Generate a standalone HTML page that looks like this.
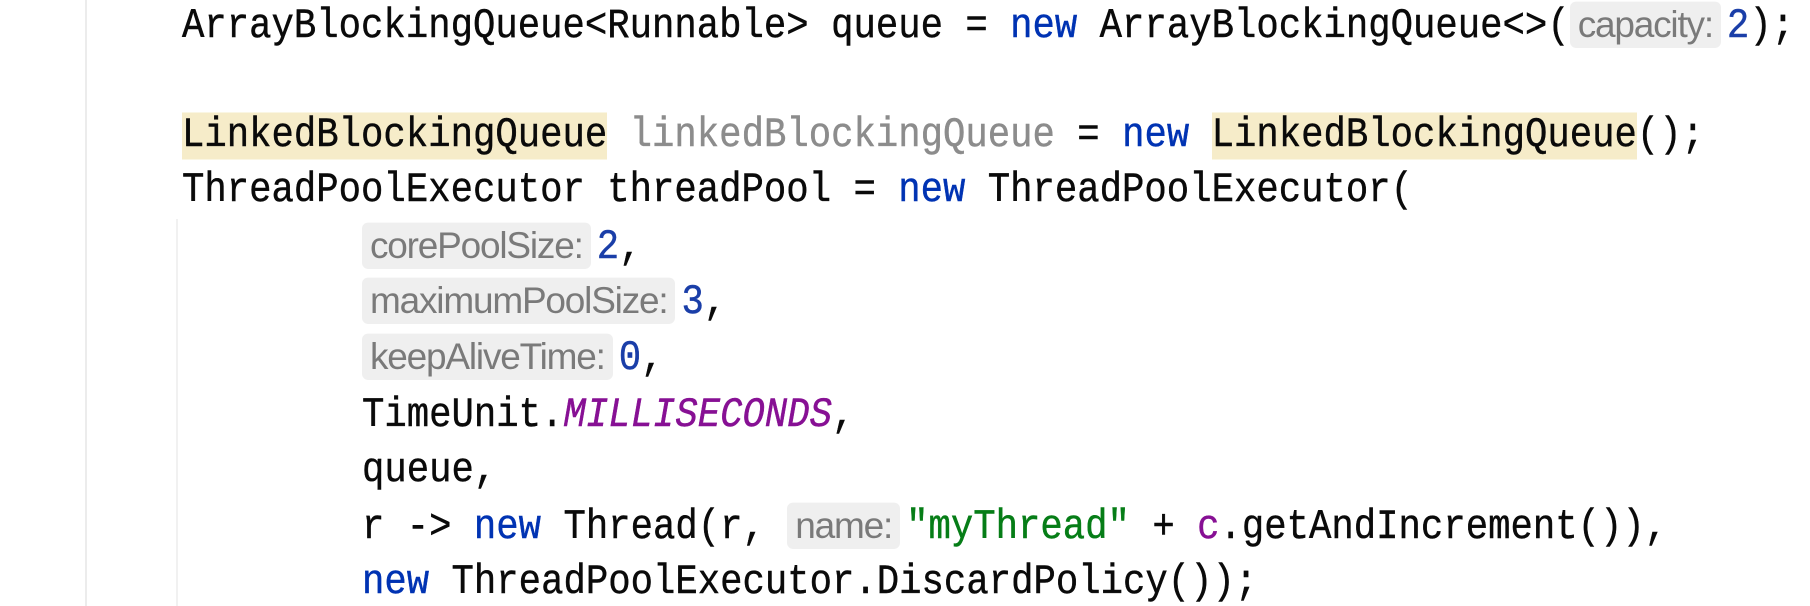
<!DOCTYPE html>
<html><head><meta charset="utf-8"><style>
html,body{margin:0;padding:0;background:#fff;width:1810px;height:606px;overflow:hidden;position:relative}
.vl{position:absolute;width:2px;background:#ececec}
.ln{position:absolute;left:182px;height:56px;line-height:56px;font-family:"Liberation Mono",monospace;font-size:37.3px;color:#0a0a0a;white-space:pre;transform:scaleY(1.12);transform-origin:left center;-webkit-text-stroke:0.4px #0a0a0a}
.in{left:362px}
.k{color:#0033b3;-webkit-text-stroke-color:#0033b3}.n{color:#1a3ea8;-webkit-text-stroke-color:#1a3ea8}.s{color:#067d17;-webkit-text-stroke-color:#067d17}.p{color:#871094;-webkit-text-stroke-color:#871094}.g{color:#8c8c8c;-webkit-text-stroke-color:#8c8c8c}
.hl{background:#f6ecc9}
.h{display:inline-block;font-family:"Liberation Sans",sans-serif;font-size:37px;letter-spacing:-1.2px;color:#7a7a7a;-webkit-text-stroke:0;background:#efefef;border-radius:6px;padding:0 8px;line-height:46px;margin-right:6px;vertical-align:-1px;transform:scaleY(0.9)}
</style></head><body>
<div class="vl" style="left:85px;top:0;height:606px"></div>
<div class="vl" style="left:176px;top:219px;height:387px;background:#f1f1f1"></div>
<div class="ln" style="top:-1px">ArrayBlockingQueue&lt;Runnable&gt; queue = <span class="k">new</span> ArrayBlockingQueue&lt;&gt;(<span class="h">capacity:</span><span class="n">2</span>);</div>
<div class="ln" style="top:108px"><span class="hl">LinkedBlockingQueue</span> <span class="g">linkedBlockingQueue</span> = <span class="k">new</span> <span class="hl">LinkedBlockingQueue</span>();</div>
<div class="ln" style="top:163px">ThreadPoolExecutor threadPool = <span class="k">new</span> ThreadPoolExecutor(</div>
<div class="ln in" style="top:220px"><span class="h">corePoolSize:</span><span class="n">2</span>,</div>
<div class="ln in" style="top:275px"><span class="h">maximumPoolSize:</span><span class="n">3</span>,</div>
<div class="ln in" style="top:331px"><span class="h">keepAliveTime:</span><span class="n">0</span>,</div>
<div class="ln in" style="top:388px">TimeUnit.<i class="p">MILLISECONDS</i>,</div>
<div class="ln in" style="top:443px">queue,</div>
<div class="ln in" style="top:500px">r -&gt; <span class="k">new</span> Thread(r, <span class="h">name:</span><span class="s">"myThread"</span> + <span class="p">c</span>.getAndIncrement()),</div>
<div class="ln in" style="top:555px"><span class="k">new</span> ThreadPoolExecutor.DiscardPolicy());</div>
</body></html>
